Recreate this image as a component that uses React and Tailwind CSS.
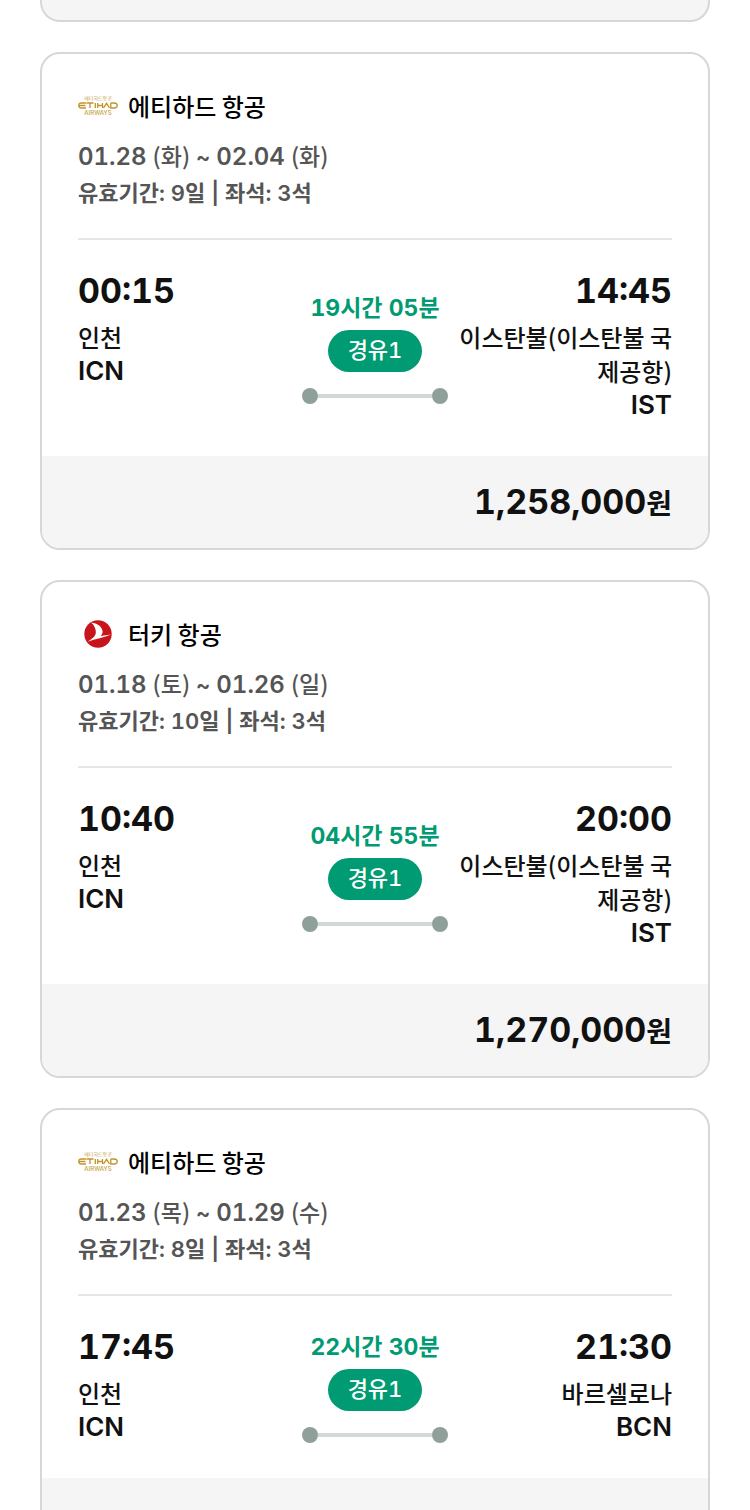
import React from "react";

const flights = [
  {
    id: 1,
    airline: "에티하드 항공",
    logo: "etihad",
    from: ["01.28", "(화)"],
    to: ["02.04", "(화)"],
    info: "유효기간: 9일 | 좌석: 3석",
    dep: { time: "00:15", city: "인천", code: "ICN" },
    arr: { time: "14:45", city: "이스탄불(이스탄불 국제공항)", code: "IST" },
    duration: "19시간 05분",
    stop: "경유1",
    price: "1,258,000",
  },
  {
    id: 2,
    airline: "터키 항공",
    logo: "turkish",
    from: ["01.18", "(토)"],
    to: ["01.26", "(일)"],
    info: "유효기간: 10일 | 좌석: 3석",
    dep: { time: "10:40", city: "인천", code: "ICN" },
    arr: { time: "20:00", city: "이스탄불(이스탄불 국제공항)", code: "IST" },
    duration: "04시간 55분",
    stop: "경유1",
    price: "1,270,000",
  },
  {
    id: 3,
    airline: "에티하드 항공",
    logo: "etihad",
    from: ["01.23", "(목)"],
    to: ["01.29", "(수)"],
    info: "유효기간: 8일 | 좌석: 3석",
    dep: { time: "17:45", city: "인천", code: "ICN" },
    arr: { time: "21:30", city: "바르셀로나", code: "BCN" },
    duration: "22시간 30분",
    stop: "경유1",
    price: "",
  },
];

const EtihadLogo = () => (
  <div className="flex h-10 w-10 shrink-0 flex-col items-center justify-center text-[#c9a040]">
    <span className="text-[5px] leading-[5px] whitespace-nowrap">에티하드항공</span>
    <svg viewBox="0 0 40 7" className="my-px h-[7px] w-10" fill="none" stroke="#c2922a" strokeWidth="1.3">
      <path d="M8 1H3.5Q.8 1 .8 3.5T3.5 6H8M.8 3.5H7.5M8.5 1H15.5M12 1V6M17.3 1V6M19.7 1V6M19.7 3.5H24.5M24.5 1V6M25.5 6L28.6 1.3L31.5 6M32.8 1V6H36Q39.2 6 39.2 3.5T36 1H32.8" />
    </svg>
    <span className="text-[6px] leading-[6px] font-medium">AIRWAYS</span>
  </div>
);

const TurkishLogo = () => (
  <svg viewBox="0 0 40 40" className="h-10 w-10 shrink-0">
    <circle cx="20" cy="20" r="13.7" fill="#c8141a" />
    <path d="M13 8.4C19.5 9 24.6 13 24.6 17.6C24.6 19.8 23.8 21 22.6 22L33.2 20.6C26 23.6 17.5 25 9.6 27.8C13.5 25.2 17.4 23 17.8 18.8C18.1 15.2 16.6 11.2 13 8.4Z" fill="#fff" />
  </svg>
);

const Place = ({ place, right }) => (
  <div className={right ? "text-right" : ""}>
    <p className="mb-2 text-[34px] leading-[42px] font-bold tabular-nums">{place.time}</p>
    <p className="font-['Noto_Sans_CJK_KR',sans-serif] text-2xl leading-[34px] font-medium break-all">{place.city}</p>
    <p className="text-[26px] leading-[34px] font-semibold">{place.code}</p>
  </div>
);

const FlightCard = ({ flight }) => (
  <li className="overflow-hidden rounded-[20px] border-2 border-[#d6d8d8] bg-white">
    <div className="px-9 pt-8">
      <div className="border-b-2 border-[#e6e6e6] pb-[26px]">
        <div className="mb-[10px] flex h-10 items-center gap-[10px]">
          {flight.logo === "etihad" ? <EtihadLogo /> : <TurkishLogo />}
          <h2 className="font-['Noto_Sans_CJK_KR',sans-serif] text-2xl font-medium text-black">{flight.airline}</h2>
        </div>
        <p className="flex h-[38px] items-baseline gap-[6px] text-2xl leading-[38px] font-semibold text-[#555] tabular-nums">
          <span>{flight.from[0]}</span>
          <span className="font-['Noto_Sans_CJK_KR',sans-serif] text-[23px] leading-[38px] font-medium">{flight.from[1]}</span>
          <span className="text-[22px] leading-[38px]">~</span>
          <span>{flight.to[0]}</span>
          <span className="font-['Noto_Sans_CJK_KR',sans-serif] text-[23px] leading-[38px] font-medium">{flight.to[1]}</span>
        </p>
        <p className="text-[22px] leading-[38px] font-semibold text-[#555] tabular-nums">{flight.info}</p>
      </div>

      <div className="grid grid-cols-[1fr_146px_1fr] items-center gap-x-[10px] pt-[30px] pb-[34px]">
        <div className="self-start">
          <Place place={flight.dep} />
        </div>
        <div className="flex flex-col items-center">
          <p className="mb-[2px] text-[23px] leading-10 font-bold whitespace-nowrap text-[#009b72] tabular-nums">{flight.duration}</p>
          <span className="h-[42px] rounded-full bg-[#009b72] px-5 text-[22px] leading-10 font-medium text-white tabular-nums">
            {flight.stop}
          </span>
          <div className="mt-4 flex w-full items-center">
            <i className="h-4 w-4 rounded-full bg-[#8f9f9a]" />
            <i className="h-1 flex-1 bg-[#d1dad7]" />
            <i className="h-4 w-4 rounded-full bg-[#8f9f9a]" />
          </div>
        </div>
        <Place place={flight.arr} right />
      </div>
    </div>

    <div className="flex h-[92px] items-center justify-end bg-[#f5f5f5] px-9 pt-[2px]">
      {flight.price && (
        <p className="text-[34px] leading-10 font-bold tabular-nums">
          {flight.price}
          <span className="text-[28px]">원</span>
        </p>
      )}
    </div>
  </li>
);

const App = () => {
  return (
    <main className="h-screen overflow-hidden bg-white px-10 font-['Inter','Noto_Sans_CJK_KR',sans-serif] text-[#111]">
      {/* end of the previous card */}
      <div className="mb-[30px] h-[22px] rounded-b-[20px] border-x-2 border-b-2 border-[#d6d8d8] bg-[#f5f5f5]" />
      <ul className="flex flex-col gap-[30px]">
        {flights.map((flight) => (
          <FlightCard key={flight.id} flight={flight} />
        ))}
      </ul>
    </main>
  );
};

export default App;
